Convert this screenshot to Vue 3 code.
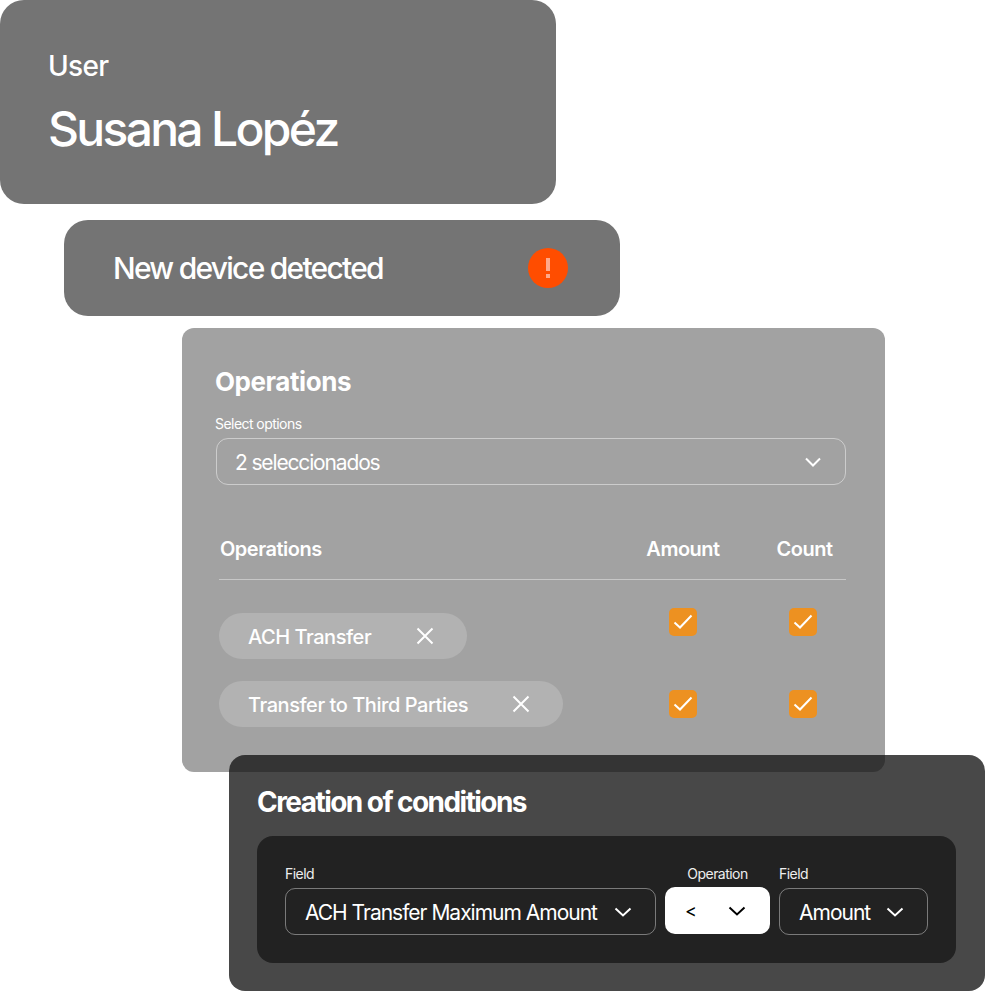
<script setup>
const rows = [
  { name: 'ACH Transfer', gap: 'gap-a' },
  { name: 'Transfer to Third Parties', gap: 'gap-b' },
]
</script>

<template>
  <main class="stage">
    <section class="card user">
      <p class="user-label">User</p>
      <h1 class="user-name">Susana Lopéz</h1>
    </section>

    <section class="card device">
      <span class="device-text">New device detected</span>
      <svg class="alert" width="40" height="40" viewBox="0 0 40 40">
        <circle cx="20" cy="20" r="20" fill="#ff4d00" />
        <path d="M18 10h4v13h-4zM18 26h4v4h-4z" fill="#ffa98a" />
      </svg>
    </section>

    <section class="ops">
      <h2 class="ops-title">Operations</h2>
      <label class="ops-label">Select options</label>
      <div class="select ops-select">
        <span>2 seleccionados</span>
        <svg class="chev" width="20" height="20" viewBox="0 0 20 20"><path d="M3 6.5l7 7 7-7" /></svg>
      </div>
      <div class="table">
        <div class="thead">
          <span>Operations</span>
          <span class="center">Amount</span>
          <span class="center">Count</span>
        </div>
        <div v-for="(row, i) in rows" :key="row.name" class="trow" :class="{ first: i === 0 }">
          <div>
            <span class="pill" :class="row.gap">
              <span class="pill-text">{{ row.name }}</span>
              <svg width="20" height="20" viewBox="0 0 20 20"><path d="M2.5 2.5l15 15M17.5 2.5l-15 15" /></svg>
            </span>
          </div>
          <span v-for="c in 2" :key="c" class="check">
            <svg width="20" height="16" viewBox="0 0 20 16"><path d="M1.5 8.5l5.5 5L18.5 1.5" /></svg>
          </span>
        </div>
      </div>
    </section>

    <section class="cond">
      <h2 class="cond-title">Creation of conditions</h2>
      <div class="panel">
        <div class="col">
          <label>Field</label>
          <div class="select field-a">
            <span>ACH Transfer Maximum Amount</span>
            <svg class="chev" width="20" height="20" viewBox="0 0 20 20"><path d="M2.5 6.5l7.5 7 7.5-7" /></svg>
          </div>
        </div>
        <div class="col">
          <label class="op-label">Operation</label>
          <div class="op-select">
            <span>&lt;</span>
            <svg class="chev" width="20" height="20" viewBox="0 0 20 20"><path d="M2.5 6.5l7.5 7 7.5-7" /></svg>
          </div>
        </div>
        <div class="col">
          <label>Field</label>
          <div class="select field-b">
            <span>Amount</span>
            <svg class="chev" width="20" height="20" viewBox="0 0 20 20"><path d="M2.5 6.5l7.5 7 7.5-7" /></svg>
          </div>
        </div>
      </div>
    </section>
  </main>
</template>

<style scoped>
.stage {
  width: 985px;
  height: 992px;
  overflow: hidden;
  background: #fff;
  color: #fff;
  font-family: Inter, "Liberation Sans", sans-serif;
  box-sizing: border-box;
}
h1, h2, p { margin: 0; }
.card { background: #747474; border-radius: 24px; width: 556px; box-sizing: border-box; }
.user { height: 204px; padding: 46px 48px 0; }
.user-label { font-size: 28px; line-height: 40px; letter-spacing: -0.7px; font-weight: 500; }
.user-name { font-size: 48px; line-height: 60px; margin-top: 13px; font-weight: 500; letter-spacing: -2.7px; }
.device {
  height: 96px; margin: 16px 0 0 64px; padding: 0 52px 0 49px;
  display: flex; align-items: center; justify-content: space-between;
}
.device-text { font-size: 30px; font-weight: 500; letter-spacing: -1.75px; }
.ops {
  width: 703px; height: 444px; margin: 12px 0 0 182px; padding: 34px 39px 0 33px;
  box-sizing: border-box; background: #a2a2a2; border-radius: 12px;
}
.ops-title { font-size: 26px; line-height: 40px; font-weight: 700; letter-spacing: -0.45px; }
.ops-label { display: block; font-size: 14px; line-height: 20px; margin-top: 12px; letter-spacing: -0.55px; }
.select {
  display: flex; align-items: center; justify-content: space-between;
  height: 47px; box-sizing: border-box; border: 1px solid rgba(255,255,255,.45); border-radius: 12px;
  font-size: 21px; letter-spacing: -1px; white-space: nowrap;
}
.select span { padding-top: 2px; }
.ops-select { width: 630px; margin: 4px 0 0 1px; padding: 0 22px 0 18px; letter-spacing: -1.15px; }
.chev path { fill: none; stroke: currentColor; stroke-width: 2; }
.table { width: 627px; margin: 34px 0 0 4px; }
.thead {
  display: grid; grid-template-columns: 384px 160px 83px; align-items: center;
  height: 60px; border-bottom: 1px solid rgba(255,255,255,.4); box-sizing: content-box;
  font-size: 20px; font-weight: 600; letter-spacing: -0.5px;
}
.thead span:first-child { padding-left: 1px; }
.center { text-align: center; }
.trow {
  display: grid; grid-template-columns: 384px 160px 83px; align-items: center; justify-items: start;
  margin-top: 22px;
}
.trow.first { margin-top: 33px; }
.pill {
  display: inline-flex; align-items: center; height: 46px; white-space: nowrap;
  background: #b2b2b2; border-radius: 23px; padding: 0 32px 0 29px;
  font-size: 20px; font-weight: 500; letter-spacing: -0.45px;
}
.pill-text { padding-top: 2px; }
.pill svg path { fill: none; stroke: #fff; stroke-width: 2; }
.gap-a svg { margin-left: 44px; }
.gap-b svg { margin-left: 43px; }
.check {
  justify-self: center; width: 28px; height: 28px; border-radius: 5px; background: #ed9121;
  display: flex; align-items: center; justify-content: center;
}
.check:last-child { margin-right: 3px; }
.first .check { margin-top: -28px; }
.check path { fill: none; stroke: #fff; stroke-width: 2; }
.cond {
  position: relative;
  width: 756px; height: 236px; margin: -17px 0 0 229px; padding: 28px 28px 0;
  box-sizing: border-box; background: rgba(22,22,22,.785); border-radius: 16px;
}
.cond-title { font-size: 28px; line-height: 38px; font-weight: 700; letter-spacing: -1.55px; }
.panel {
  display: flex; gap: 9px; align-items: flex-end; box-sizing: border-box;
  width: 699px; height: 127px; margin-top: 15px; padding: 0 28px 28px; background: #222; border-radius: 16px;
}
.col label { display: block; font-size: 14px; line-height: 20px; margin-bottom: 4px; letter-spacing: -0.55px; color: #eee; }
.col .op-label { text-align: center; margin-bottom: 3px; }
.field-a { width: 371px; padding: 0 22px 0 19px; border-color: rgba(255,255,255,.4); border-radius: 10px; }
.field-b { width: 149px; padding: 0 22px 0 19px; border-color: rgba(255,255,255,.4); border-radius: 10px; }
.op-select {
  width: 105px; height: 47px; margin-bottom: 1px; background: #fff; color: #000; border-radius: 10px; box-sizing: border-box;
  display: flex; align-items: center; justify-content: space-between; padding: 0 23px 0 20px; font-size: 18px;
}
</style>
